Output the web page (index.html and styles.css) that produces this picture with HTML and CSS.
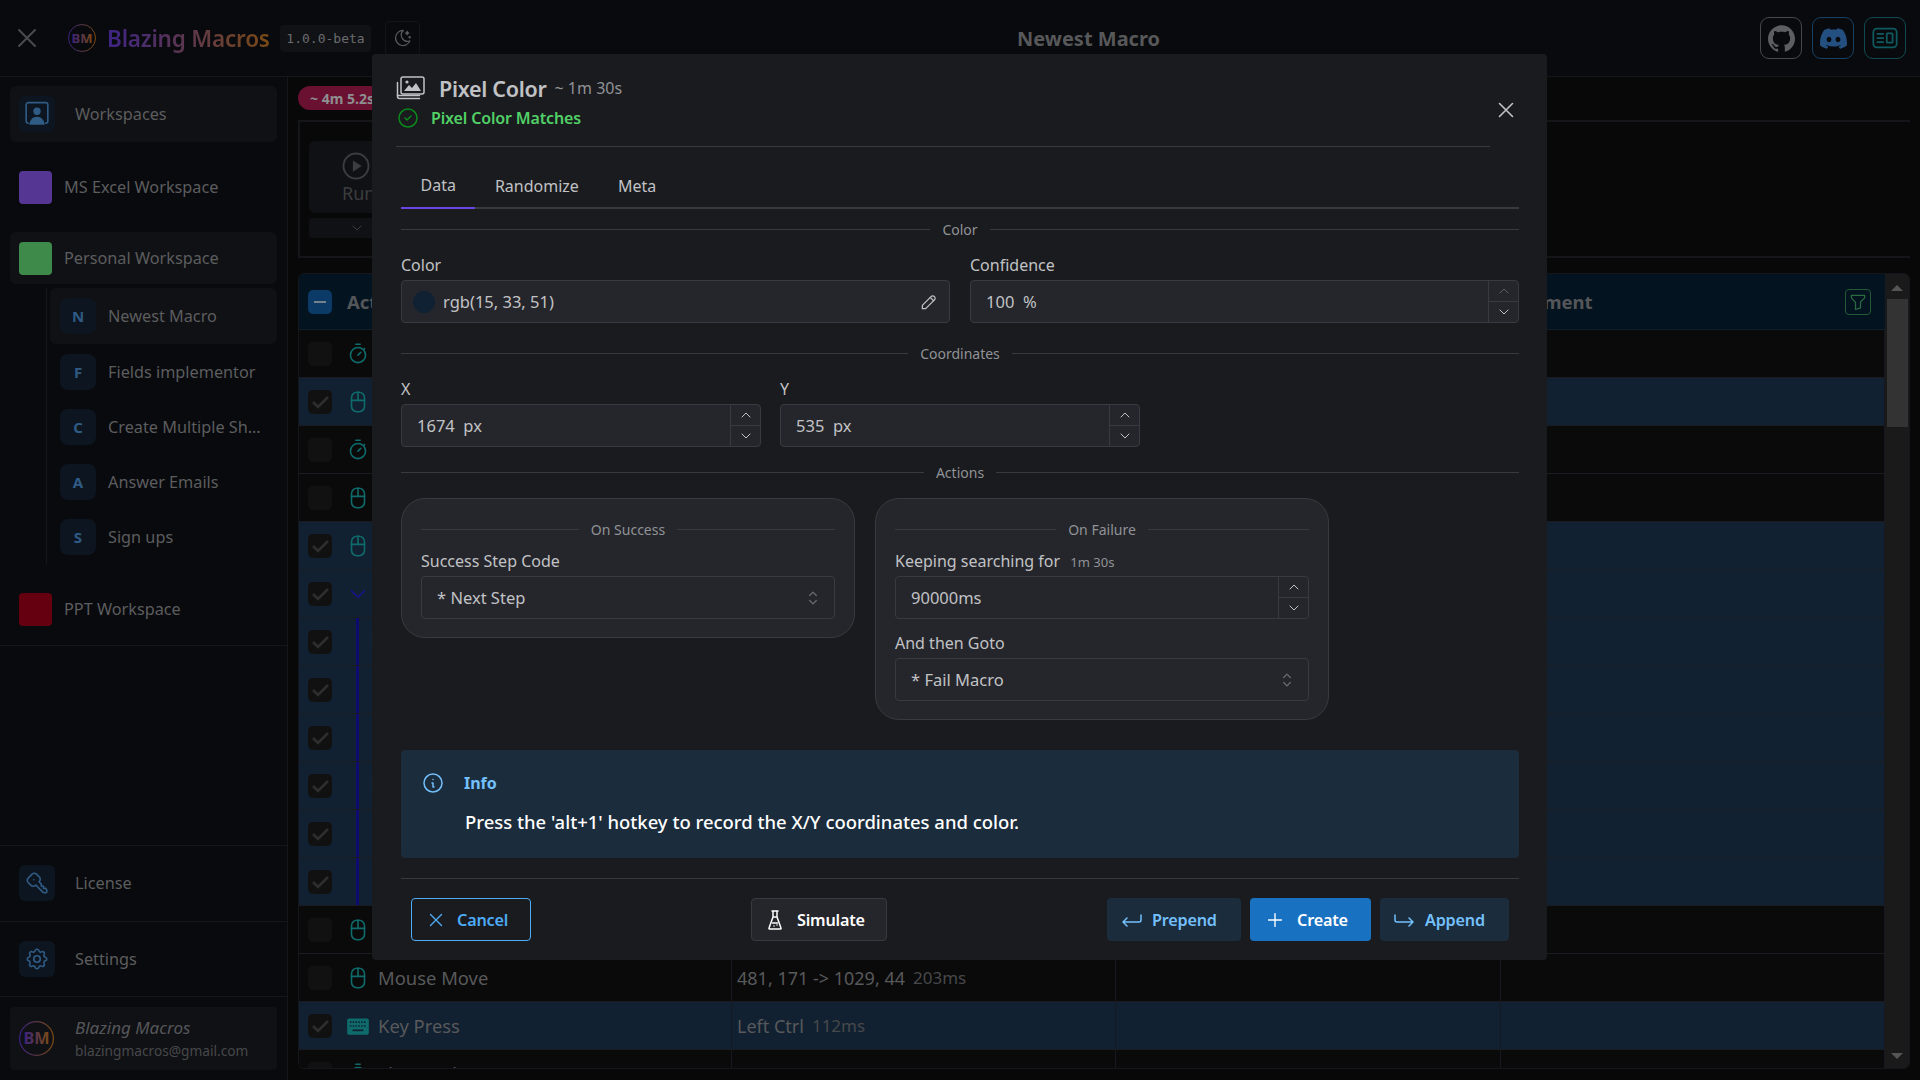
FILE: index.html
```html
<!DOCTYPE html>
<html lang="en">
<head>
<meta charset="utf-8">
<title>Blazing Macros</title>
<link rel="stylesheet" href="styles.css">
</head>
<body>
<svg class="sprite" width="0" height="0">
  <defs>
    <linearGradient id="logoGrad" x1="0" y1="0" x2="1" y2="0"><stop offset="0" stop-color="#3a2280"/><stop offset="1" stop-color="#7a4a12"/></linearGradient>
    <symbol id="i-x" viewBox="0 0 24 24"><path d="M18 6L6 18M6 6l12 12"/></symbol>
    <symbol id="i-moon" viewBox="0 0 24 24"><path d="M12 3c.132 0 .263 0 .393 0a7.5 7.5 0 0 0 7.92 12.446a9 9 0 1 1 -8.313 -12.454z"/><path d="M17 4a2 2 0 0 0 2 2a2 2 0 0 0 -2 2a2 2 0 0 0 -2 -2a2 2 0 0 0 2 -2"/><path d="M19 11h2m-1 -1v2"/></symbol>
    <symbol id="i-mouse" viewBox="0 0 24 24"><path d="M6 8a5 5 0 0 1 5-5h2a5 5 0 0 1 5 5v8a5 5 0 0 1-5 5h-2a5 5 0 0 1-5-5z"/><path d="M12 3v7.500M6 10.500h12"/></symbol>
    <symbol id="i-watch" viewBox="0 0 24 24"><path d="M5 13a7 7 0 1 0 14 0a7 7 0 0 0-14 0z"/><path d="M14.500 10.500L12 13M17 8l1-1M14 3h-4"/></symbol>
    <symbol id="i-chev" viewBox="0 0 24 24"><path d="M6 9l6 6l6-6"/></symbol>
    <symbol id="i-up" viewBox="0 0 24 24"><path d="M6 15l6-6l6 6"/></symbol>
    <symbol id="i-check" viewBox="0 0 24 24"><path class="thick" d="M5 12l5 5L20 7"/></symbol>
    <symbol id="i-selector" viewBox="0 0 24 24"><path d="M8 9l4-4l4 4M16 15l-4 4l-4-4"/></symbol>
    <symbol id="i-info" viewBox="0 0 24 24"><circle cx="12" cy="12" r="9"/><path d="M12 8.500h.01M11 12h1v4h1"/></symbol>
    <symbol id="i-ok" viewBox="0 0 24 24"><circle cx="12" cy="12" r="9"/><path d="M9 12l2 2l4-4"/></symbol>
    <symbol id="i-pencil" viewBox="0 0 24 24"><path d="M4 20h4L18.500 9.500a2.828 2.828 0 1 0-4-4L4 16v4"/><path d="M13.500 6.500l4 4"/></symbol>
    <symbol id="i-flask" viewBox="0 0 24 24"><path d="M9 3h6M10 9h4M10 3v6L6 20a.7.7 0 0 0 .5 1h11a.7.7 0 0 0 .5-1L14 9V3"/><path d="M9.500 15h5M11 18h.01M14 17h.01"/></symbol>
    <symbol id="i-prepend" viewBox="0 0 24 24"><path d="M21 7v5a2 2 0 0 1-2 2H3m4-4l-4 4l4 4"/></symbol>
    <symbol id="i-append" viewBox="0 0 24 24"><path d="M3 7v5a2 2 0 0 0 2 2h16m-4-4l4 4l-4 4"/></symbol>
    <symbol id="i-plus" viewBox="0 0 24 24"><path d="M12 5v14M5 12h14"/></symbol>
    <symbol id="i-key" viewBox="0 0 24 24"><g transform="matrix(-1 0 0 1 24 0)"><path d="M16.555 3.843l3.602 3.602a2.877 2.877 0 0 1 0 4.069l-2.643 2.643a2.877 2.877 0 0 1-4.069 0l-.301-.301l-6.558 6.558a2 2 0 0 1-1.239.578l-.175.008h-1.172a1 1 0 0 1-.993-.883l-.007-.117v-1.172a2 2 0 0 1 .467-1.284l.119-.16l.414-.414h2v-2h2v-2l2.144-2.144l-.301-.301a2.877 2.877 0 0 1 0-4.069l2.643-2.643a2.877 2.877 0 0 1 4.069 0z"/><path d="M15 9h.01"/></g></symbol>
    <symbol id="i-gear" viewBox="0 0 24 24"><path d="M10.325 4.317c.426-1.756 2.924-1.756 3.35 0a1.724 1.724 0 0 0 2.573 1.066c1.543-.94 3.31.826 2.37 2.37a1.724 1.724 0 0 0 1.065 2.572c1.756.426 1.756 2.924 0 3.35a1.724 1.724 0 0 0-1.066 2.573c.94 1.543-.826 3.31-2.37 2.37a1.724 1.724 0 0 0-2.572 1.065c-.426 1.756-2.924 1.756-3.35 0a1.724 1.724 0 0 0-2.573-1.066c-1.543.94-3.31-.826-2.37-2.37a1.724 1.724 0 0 0-1.065-2.572c-1.756-.426-1.756-2.924 0-3.35a1.724 1.724 0 0 0 1.066-2.573c-.94-1.543.826-3.31 2.37-2.37c1 .608 2.296.07 2.572-1.065z"/><circle cx="12" cy="12" r="3"/></symbol>
    <symbol id="i-filter" viewBox="0 0 24 24"><path d="M4 4h16v2.172a2 2 0 0 1-.586 1.414L15 12v7l-6 2v-8.500L4.520 7.572A2 2 0 0 1 4 6.227V4z"/></symbol>
    <symbol id="i-layout" viewBox="0 0 24 24"><rect x="2" y="4" width="20" height="16" rx="3"/><path d="M5.500 8.500h5M5.500 12h5M5.500 15.500h5"/><rect x="13.500" y="8" width="5" height="8" rx=".6"/></symbol>
    <symbol id="i-clip" viewBox="0 0 24 24"><rect x="5" y="5" width="14" height="16" rx="2"/><path d="M9 5a2 2 0 0 1 2-2h2a2 2 0 0 1 2 2"/></symbol>
    <symbol id="i-dot" viewBox="0 0 24 24"><circle cx="12" cy="12" r="9"/></symbol>
    <symbol id="i-github" viewBox="0 0 24 24"><path class="solid" d="M12 .297c-6.63 0-12 5.373-12 12 0 5.303 3.438 9.8 8.205 11.385.6.113.82-.258.82-.577 0-.285-.01-1.04-.015-2.04-3.338.724-4.042-1.61-4.042-1.61C4.422 18.07 3.633 17.7 3.633 17.7c-1.087-.744.084-.729.084-.729 1.205.084 1.838 1.236 1.838 1.236 1.07 1.835 2.809 1.305 3.495.998.108-.776.417-1.305.76-1.605-2.665-.3-5.466-1.332-5.466-5.93 0-1.31.465-2.38 1.235-3.22-.135-.303-.54-1.523.105-3.176 0 0 1.005-.322 3.3 1.23.96-.267 1.98-.399 3-.405 1.02.006 2.04.138 3 .405 2.28-1.552 3.285-1.23 3.285-1.23.645 1.653.24 2.873.12 3.176.765.84 1.23 1.91 1.23 3.22 0 4.61-2.805 5.625-5.475 5.92.42.36.81 1.096.81 2.22 0 1.606-.015 2.896-.015 3.286 0 .315.21.69.825.57C20.565 22.092 24 17.592 24 12.297c0-6.627-5.373-12-12-12"/></symbol>
    <symbol id="i-discord" viewBox="0 0 24 24"><path class="solid" d="M20.317 4.3698a19.7913 19.7913 0 00-4.8851-1.5152.0741.0741 0 00-.0785.0371c-.211.3753-.4447.8648-.6083 1.2495-1.8447-.2762-3.68-.2762-5.4868 0-.1636-.3933-.4058-.8742-.6177-1.2495a.077.077 0 00-.0785-.037 19.7363 19.7363 0 00-4.8852 1.515.0699.0699 0 00-.0321.0277C.5334 9.0458-.319 13.5799.0992 18.0578a.0824.0824 0 00.0312.0561c2.0528 1.5076 4.0413 2.4228 5.9929 3.0294a.0777.0777 0 00.0842-.0276c.4616-.6304.8731-1.2952 1.226-1.9942a.076.076 0 00-.0416-.1057c-.6528-.2476-1.2743-.5495-1.8722-.8923a.077.077 0 01-.0076-.1277c.1258-.0943.2517-.1923.3718-.2914a.0743.0743 0 01.0776-.0105c3.9278 1.7933 8.18 1.7933 12.0614 0a.0739.0739 0 01.0785.0095c.1202.099.246.1981.3728.2924a.077.077 0 01-.0066.1276 12.2986 12.2986 0 01-1.873.8914.0766.0766 0 00-.0407.1067c.3604.698.7719 1.3628 1.225 1.9932a.076.076 0 00.0842.0286c1.961-.6067 3.9495-1.5219 6.0023-3.0294a.077.077 0 00.0313-.0552c.5004-5.177-.8382-9.6739-3.5485-13.6604a.061.061 0 00-.0312-.0286zM8.02 15.3312c-1.1825 0-2.1569-1.0857-2.1569-2.419 0-1.3332.9555-2.4189 2.157-2.4189 1.2108 0 2.1757 1.0952 2.1568 2.419 0 1.3332-.9555 2.4189-2.1569 2.4189zm7.9748 0c-1.1825 0-2.1569-1.0857-2.1569-2.419 0-1.3332.9554-2.4189 2.1569-2.4189 1.2108 0 2.1757 1.0952 2.1568 2.419 0 1.3332-.946 2.4189-2.1568 2.4189Z"/></symbol>
    <symbol id="i-user" viewBox="0 0 24 24"><path d="M4 1.500h16a2 2 0 0 1 2 2v15a2 2 0 0 1-2 2M4 1.500a2 2 0 0 0-2 2v15a2 2 0 0 0 2 2"/><circle class="solid" cx="12" cy="9.500" r="3.400"/><path class="solid" d="M5 22c0-4.500 3.200-7.500 7-7.500s7 3 7 7.500z"/></symbol>
    <symbol id="i-photos" viewBox="0 0 30 24"><rect x="6" y="1" width="23" height="17" rx="2"/><path class="solid" d="M9 15l5-6 3 3 4-5 5 8z"/><circle class="solid" cx="12" cy="6" r="1.6"/><path d="M2.500 6.500v14a2 2 0 0 0 2 2h20"/><path d="M2.500 19.500h22"/></symbol>
    <symbol id="i-kbd" viewBox="0 0 24 24"><rect class="solid" x="2" y="5" width="20" height="15" rx="1.500"/><path class="hole" d="M4.500 8.500h15M4.500 12h15"/><path class="hole wide" d="M7 16h10"/></symbol>
    <symbol id="i-play" viewBox="0 0 24 24"><circle cx="12" cy="12" r="10"/><path class="solid" d="M9.500 7.500v9l7-4.500z"/></symbol>
  </defs>
</svg>

<div class="app">
  <header class="topbar">
    <div class="brand">
      <svg class="ico close-ico"><use href="#i-x"/></svg>
      <svg class="logo" viewBox="0 0 28 28"><circle cx="14" cy="14" r="13.500" fill="none" stroke="url(#logoGrad)"/><text x="14" y="18.500" text-anchor="middle" font-size="13" font-weight="700" fill="url(#logoGrad)">BM</text></svg>
      <span class="brand-name">Blazing Macros</span>
      <span class="version">1.0.0-beta</span>
      <button class="moon"><svg class="ico"><use href="#i-moon"/></svg></button>
    </div>
    <div class="page-title">Newest Macro</div>
    <div class="top-actions">
      <span class="top-btn gh"><svg class="fill-ico"><use href="#i-github"/></svg></span>
      <span class="top-btn dc"><svg class="fill-ico"><use href="#i-discord"/></svg></span>
      <span class="top-btn lay"><svg class="lay-ico"><use href="#i-layout"/></svg></span>
    </div>
  </header>

  <div class="shell">
    <aside class="sidebar">
      <div class="nav">
        <div class="nav-row head"><span class="icon-box"><svg class="ico box-ico"><use href="#i-user"/></svg></span><span>Workspaces</span></div>
        <div class="ws"><span class="swatch purple"></span><span>MS Excel Workspace</span></div>
        <div class="ws active"><span class="swatch green"></span><span>Personal Workspace</span></div>
        <div class="macros">
          <div class="macro active"><span class="letter">N</span><span>Newest Macro</span></div>
          <div class="macro"><span class="letter">F</span><span>Fields implementor</span></div>
          <div class="macro"><span class="letter">C</span><span class="trunc">Create Multiple Sheets</span></div>
          <div class="macro"><span class="letter">A</span><span>Answer Emails</span></div>
          <div class="macro"><span class="letter">S</span><span>Sign ups</span></div>
        </div>
        <div class="ws last"><span class="swatch red"></span><span>PPT Workspace</span></div>
      </div>
      <div class="side-foot">
        <div class="foot-row"><span class="icon-box"><svg class="ico box-ico"><use href="#i-key"/></svg></span><span>License</span></div>
        <div class="foot-row"><span class="icon-box"><svg class="ico box-ico"><use href="#i-gear"/></svg></span><span>Settings</span></div>
        <div class="profile-wrap">
          <div class="profile">
            <svg class="avatar" viewBox="0 0 28 28"><circle cx="14" cy="14" r="13.500" fill="none" stroke="url(#logoGrad)"/><text x="14" y="18.500" text-anchor="middle" font-size="13" font-weight="700" fill="url(#logoGrad)">BM</text></svg>
            <div class="who"><em>Blazing Macros</em><small>blazingmacros@gmail.com</small></div>
          </div>
        </div>
      </div>
    </aside>

    <main class="main">
      <span class="pill">~ 4m 5.2s</span>
      <section class="run-panel">
        <div class="run-col">
          <div class="run-btn"><svg class="ico play"><use href="#i-play"/></svg><span>Run</span></div>
          <div class="run-more"><svg class="ico"><use href="#i-chev"/></svg></div>
        </div>
      </section>
      <section class="table">
        <div class="table-body">
          <div class="row thead">
            <div class="cell first"><span class="cb minus"></span><b class="th-a">Action</b></div>
            <div class="cell"></div><div class="cell"></div>
            <div class="cell th-c"><b>Comment</b><span class="filter"><svg class="ico"><use href="#i-filter"/></svg></span></div>
          </div>
          <div class="row"><div class="cell first"><span class="cb"></span><svg class="ico act"><use href="#i-watch"/></svg></div><div class="cell"></div><div class="cell"></div><div class="cell"></div></div>
          <div class="row sel"><div class="cell first"><span class="cb on"><svg class="ico"><use href="#i-check"/></svg></span><svg class="ico act"><use href="#i-mouse"/></svg></div><div class="cell"></div><div class="cell"></div><div class="cell"></div></div>
          <div class="row"><div class="cell first"><span class="cb"></span><svg class="ico act"><use href="#i-watch"/></svg></div><div class="cell"></div><div class="cell"></div><div class="cell"></div></div>
          <div class="row"><div class="cell first"><span class="cb"></span><svg class="ico act"><use href="#i-mouse"/></svg></div><div class="cell"></div><div class="cell"></div><div class="cell"></div></div>
          <div class="row sel"><div class="cell first"><span class="cb on"><svg class="ico"><use href="#i-check"/></svg></span><svg class="ico act"><use href="#i-mouse"/></svg></div><div class="cell"></div><div class="cell"></div><div class="cell"></div></div>
          <div class="row sel"><div class="cell first"><span class="cb on"><svg class="ico"><use href="#i-check"/></svg></span><svg class="ico act navy"><use href="#i-chev"/></svg></div><div class="cell"></div><div class="cell"></div><div class="cell"></div></div>
          <div class="row sel"><div class="cell first"><span class="cb on"><svg class="ico"><use href="#i-check"/></svg></span><span class="bar"></span><svg class="ico act kid"><use href="#i-clip"/></svg></div><div class="cell"></div><div class="cell"></div><div class="cell"></div></div>
          <div class="row sel"><div class="cell first"><span class="cb on"><svg class="ico"><use href="#i-check"/></svg></span><span class="bar"></span><svg class="ico act kid far"><use href="#i-dot"/></svg></div><div class="cell"></div><div class="cell"></div><div class="cell"></div></div>
          <div class="row sel"><div class="cell first"><span class="cb on"><svg class="ico"><use href="#i-check"/></svg></span><span class="bar"></span><svg class="ico act kid far"><use href="#i-dot"/></svg></div><div class="cell"></div><div class="cell"></div><div class="cell"></div></div>
          <div class="row sel"><div class="cell first"><span class="cb on"><svg class="ico"><use href="#i-check"/></svg></span><span class="bar"></span><svg class="ico act kid"><use href="#i-clip"/></svg></div><div class="cell"></div><div class="cell"></div><div class="cell"></div></div>
          <div class="row sel"><div class="cell first"><span class="cb on"><svg class="ico"><use href="#i-check"/></svg></span><span class="bar"></span><svg class="ico act kid far"><use href="#i-dot"/></svg></div><div class="cell"></div><div class="cell"></div><div class="cell"></div></div>
          <div class="row sel"><div class="cell first"><span class="cb on"><svg class="ico"><use href="#i-check"/></svg></span><span class="bar"></span><svg class="ico act kid far"><use href="#i-dot"/></svg></div><div class="cell"></div><div class="cell"></div><div class="cell"></div></div>
          <div class="row"><div class="cell first"><span class="cb"></span><svg class="ico act"><use href="#i-mouse"/></svg></div><div class="cell"></div><div class="cell"></div><div class="cell"></div></div>
          <div class="row"><div class="cell first"><span class="cb"></span><svg class="ico act"><use href="#i-mouse"/></svg><span class="act-name">Mouse Move</span></div><div class="cell detail">481, 171 -&gt; 1029, 44 <small>203ms</small></div><div class="cell"></div><div class="cell"></div></div>
          <div class="row sel"><div class="cell first"><span class="cb on"><svg class="ico"><use href="#i-check"/></svg></span><svg class="ico act"><use href="#i-kbd"/></svg><span class="act-name">Key Press</span></div><div class="cell detail">Left Ctrl <small>112ms</small></div><div class="cell"></div><div class="cell"></div></div>
          <div class="row"><div class="cell first"><span class="cb"></span><svg class="ico act"><use href="#i-watch"/></svg><span class="act-name">Time Wait</span></div><div class="cell detail">150</div><div class="cell"></div><div class="cell"></div></div>
        </div>
        <div class="scroll">
          <span class="tri up"></span>
          <span class="thumb"></span>
          <span class="tri down"></span>
        </div>
      </section>
    </main>
  </div>

  <div class="modal">
    <div class="m-head">
      <div class="m-title-block">
        <div class="m-title"><svg class="photos"><use href="#i-photos"/></svg><strong>Pixel Color</strong><span>~ 1m 30s</span></div>
        <div class="m-sub"><svg class="ok"><use href="#i-ok"/></svg><span>Pixel Color Matches</span></div>
      </div>
      <svg class="ico m-close"><use href="#i-x"/></svg>
    </div>
    <div class="m-body">
      <div class="tabs">
        <span class="tab active">Data</span><span class="tab">Randomize</span><span class="tab">Meta</span>
      </div>
      <div class="divider d-color"><span>Color</span></div>
      <div class="grid-2">
        <label class="field"><span class="lbl">Color</span>
          <span class="input"><i class="color-dot"></i><span class="val">rgb(15, 33, 51)</span><svg class="ico pencil"><use href="#i-pencil"/></svg></span>
        </label>
        <label class="field"><span class="lbl">Confidence</span>
          <span class="input num"><span class="val">100&nbsp; %</span><span class="step"><span class="off"><svg class="ico"><use href="#i-up"/></svg></span><span><svg class="ico"><use href="#i-chev"/></svg></span></span></span>
        </label>
      </div>
      <div class="divider"><span>Coordinates</span></div>
      <div class="grid-3">
        <label class="field"><span class="lbl">X</span>
          <span class="input num"><span class="val">1674&nbsp; px</span><span class="step"><span><svg class="ico"><use href="#i-up"/></svg></span><span><svg class="ico"><use href="#i-chev"/></svg></span></span></span>
        </label>
        <label class="field"><span class="lbl">Y</span>
          <span class="input num"><span class="val">535&nbsp; px</span><span class="step"><span><svg class="ico"><use href="#i-up"/></svg></span><span><svg class="ico"><use href="#i-chev"/></svg></span></span></span>
        </label>
      </div>
      <div class="divider d-actions"><span>Actions</span></div>
      <div class="cards">
        <div class="card">
          <div class="divider inner"><span>On Success</span></div>
          <label class="field"><span class="lbl">Success Step Code</span>
            <span class="input"><span class="val">* Next Step</span><svg class="ico sel-ico"><use href="#i-selector"/></svg></span>
          </label>
        </div>
        <div class="card">
          <div class="divider inner"><span>On Failure</span></div>
          <label class="field"><span class="lbl">Keeping searching for <small>1m 30s</small></span>
            <span class="input num"><span class="val">90000ms</span><span class="step"><span><svg class="ico"><use href="#i-up"/></svg></span><span><svg class="ico"><use href="#i-chev"/></svg></span></span></span>
          </label>
          <label class="field next"><span class="lbl">And then Goto</span>
            <span class="input"><span class="val">* Fail Macro</span><svg class="ico sel-ico"><use href="#i-selector"/></svg></span>
          </label>
        </div>
      </div>
      <div class="alert">
        <div class="alert-head"><svg class="ico info"><use href="#i-info"/></svg><b>Info</b></div>
        <p>Press the 'alt+1' hotkey to record the X/Y coordinates and color.</p>
      </div>
      <div class="m-foot">
        <button class="btn cancel"><svg class="ico"><use href="#i-x"/></svg>Cancel</button>
        <button class="btn sim"><svg class="ico"><use href="#i-flask"/></svg>Simulate</button>
        <div class="foot-right">
          <button class="btn light prepend"><svg class="ico"><use href="#i-prepend"/></svg>Prepend</button>
          <button class="btn primary"><svg class="ico"><use href="#i-plus"/></svg>Create</button>
          <button class="btn light append"><svg class="ico"><use href="#i-append"/></svg>Append</button>
        </div>
      </div>
    </div>
  </div>
</div>
</body>
</html>
```
FILE: styles.css
```css
* { box-sizing: border-box; }
html, body { margin: 0; height: 100%; }
body { background: #090a0d; color: #5c5d5f; font-family: "Noto Sans", "Open Sans", sans-serif; font-size: 16px; overflow: hidden; }
.sprite { position: absolute; }
svg { display: block; flex: none; }
symbol path, symbol circle, symbol rect { fill: none; stroke: currentColor; stroke-width: 1.5; stroke-linecap: round; stroke-linejoin: round; }
symbol .solid { fill: currentColor; stroke: none; }
symbol .thick { stroke: #2e2e2f; stroke-width: 2.6; stroke-linecap: butt; stroke-linejoin: miter; }
symbol .hole { stroke: #112131; stroke-width: 1.6; stroke-dasharray: 1.4 1.2; stroke-linecap: butt; }
symbol .hole.wide { stroke-dasharray: none; }
.ico { width: 24px; height: 24px; }
button { font: inherit; }

.app { position: relative; display: flex; flex-direction: column; height: 1080px; }

.topbar { height: 77px; flex: none; display: grid; grid-template-columns: 427px 1fr 166px; align-items: center; border-bottom: 1px solid #14161c; padding: 0 14px 0 10px; }
.brand { display: flex; align-items: center; }
.close-ico { width: 32px; height: 32px; color: #4a4b4e; margin: 0 1px; }
.logo { width: 28px; height: 28px; margin-left: 24px; }
.logo text, .avatar text { font-family: "Noto Sans", sans-serif; }
.brand-name { margin-left: 11px; font-size: 22.500px; font-weight: 600; letter-spacing: -.2px; background: linear-gradient(90deg, #3e2485, #7b4a14); -webkit-background-clip: text; background-clip: text; color: transparent; width: 162px; white-space: nowrap; }
.version { margin-left: 11px; height: 27px; width: 91px; display: flex; align-items: center; justify-content: center; background: #111216; border-radius: 4px; font-family: "DejaVu Sans Mono", "Liberation Mono", monospace; font-size: 13px; color: #6a6b6d; }
.moon { margin-left: 14px; width: 35px; height: 35px; background: none; border: 1px solid #14151a; border-radius: 4px; padding: 0; display: flex; align-items: center; justify-content: center; color: #58595c; }
.moon .ico { width: 20px; height: 20px; }
.page-title { font-size: 20px; font-weight: 700; color: #57585a; text-align: center; white-space: nowrap; }
.top-actions { display: flex; justify-content: flex-end; gap: 10px; }
.top-btn { width: 42px; height: 42px; border-radius: 9px; border: 1px solid; display: flex; align-items: center; justify-content: center; }
.gh { border-color: #47484a; color: #5d5e60; }
.dc { border-color: #174063; color: #235080; }
.lay { border-color: #0f4a50; color: #0f5a60; }
.fill-ico { width: 27px; height: 27px; }
.lay-ico { width: 28px; height: 28px; }

.shell { flex: 1; display: flex; min-height: 0; }
.sidebar { width: 288px; flex: none; border-right: 1px solid #14161c; display: flex; flex-direction: column; }
.nav { padding: 9px 10px 0; border-bottom: 1px solid #14161c; }
.nav-row.head { height: 56px; display: flex; align-items: center; gap: 20px; background: #101114; border-radius: 6px; padding-left: 9px; margin-bottom: 19px; font-size: 16.250px; }
.icon-box { width: 36px; height: 36px; border-radius: 6px; background: #0d1620; color: #2f5b85; display: flex; align-items: center; justify-content: center; }
.box-ico { width: 26px; height: 26px; }
.ws { height: 52px; display: flex; align-items: center; gap: 12px; padding-left: 9px; margin-bottom: 19px; font-size: 16.250px; border-radius: 6px; }
.ws.active { background: #101114; margin-bottom: 4px; }
.ws.last { margin: 19px 0 10px; }
.swatch { width: 33px; height: 33px; border-radius: 4px; }
.purple { background: #553793; }
.green { background: #3d8a4a; }
.red { background: #650010; }
.macros { margin-left: 36px; border-left: 1px solid #14161c; padding-left: 3px; height: 276px; }
.macro { height: 55.250px; display: flex; align-items: center; gap: 12px; padding-left: 10px; font-size: 16.250px; border-radius: 6px; }
.macro.active { background: #101114; height: 56px; }
.letter { width: 36px; height: 36px; border-radius: 8px; background: #0d1620; color: #2f5b85; font-weight: 700; font-size: 15px; display: flex; align-items: center; justify-content: center; }
.trunc { width: 158px; white-space: nowrap; overflow: hidden; text-overflow: ellipsis; }
.side-foot { margin-top: auto; }
.foot-row { height: 75.500px; display: flex; align-items: center; gap: 20px; padding-left: 19px; border-top: 1px solid #14161c; font-size: 16.250px; }
.profile-wrap { border-top: 1px solid #14161c; padding: 10px; }
.profile { height: 63px; background: #101114; display: flex; align-items: center; gap: 21px; padding-left: 9px; border-radius: 4px; }
.avatar { width: 35px; height: 35px; }
.who { display: flex; flex-direction: column; gap: 2px; }
.who em { font-size: 17px; line-height: 22px; color: #55565a; }
.who small { font-size: 13.700px; line-height: 20px; color: #47484b; }

.main { flex: 1; min-width: 0; background: #080808; padding: 9px 10px 11px; display: flex; flex-direction: column; align-items: flex-start; }
.pill { height: 24px; flex: none; margin-bottom: 10px; padding: 0 12px; background: #6a1030; color: #8e8f90; font-size: 14px; font-weight: 700; border-radius: 12px; display: flex; align-items: center; width: 110px; }
.run-panel { width: 100%; height: 138px; flex: none; border: solid #15161a; border-width: 2px 0 2px 2px; padding: 19px 0 0 9px; margin-bottom: 15px; }
.run-col { width: 120px; }
.run-btn { height: 72px; background: #101114; border-radius: 6px; display: flex; flex-direction: column; align-items: flex-start; padding: 10px 0 0 33px; color: #3c3d3f; font-size: 18px; line-height: 24px; }
.play { width: 30px; height: 30px; margin-left: -1px; }
.run-more { margin-top: 5px; height: 20px; background: #101114; border-radius: 4px; display: flex; padding-left: 40px; align-items: center; color: #3c3d3f; }
.run-more .ico { width: 16px; height: 16px; }

.table { width: 100%; flex: 1; min-height: 0; display: flex; border-radius: 6px; overflow: hidden; border: 1px solid #14161c; background: #0a0a0a; }
.table-body { width: 1586px; flex: none; overflow: hidden; }
.row { display: grid; grid-template-columns: 433px 384px 385px 384px; height: 48px; background: #0a0a0a; border-bottom: 1px solid #1a1c22; }
.row.sel { background: #112131; }
.cell { display: flex; align-items: center; border-right: 1px solid #15181f; }
.first { padding-left: 9px; }
.thead { height: 56px; background: #03131f; border-bottom-color: #111d27; }
.thead .cell { border-right: none; }
.th-a { margin-left: 15px; font-size: 18.500px; color: #555659; }
.th-c { padding-left: 1px; justify-content: space-between; padding-right: 14px; color: #555659; font-size: 18.500px; }
.filter { width: 26px; height: 26px; border: 1px solid #235a35; border-radius: 4px; color: #2a6b40; display: flex; align-items: center; justify-content: center; }
.filter .ico { width: 20px; height: 20px; }
.cb { width: 24px; height: 24px; background: #111112; border-radius: 5px; display: flex; align-items: center; justify-content: center; flex: none; }
.cb .ico { width: 24px; height: 24px; }
.cb.minus { background: #0b3a66; position: relative; }
.cb.minus::after { content: ""; width: 12px; height: 2px; background: #75808c; }
.act { color: #0f6b6b; margin-left: 13px; width: 26px; height: 26px; }
.act.navy { color: #1a1490; }
.bar { width: 3px; height: 100%; background: #0e0a6e; margin-left: 24px; flex: none; }
.act.kid { margin-left: 9px; width: 22px; height: 22px; }
.act.far { margin-left: 11px; }
.act-name { margin-left: 7px; font-size: 18.400px; color: #58595b; }
.detail { padding-left: 5px; font-size: 18px; color: #58595b; gap: 8px; }
.detail small { font-size: 17px; color: #47484b; }
.scroll { flex: 1; background: #1a1a1a; display: flex; flex-direction: column; align-items: center; padding-top: 11px; }
.tri { width: 0; height: 0; border-left: 6px solid transparent; border-right: 6px solid transparent; }
.tri.up { border-bottom: 6px solid #555; }
.tri.down { border-top: 6px solid #555; margin-top: auto; margin-bottom: 9px; }
.thumb { width: 21px; height: 128px; background: #333; margin-top: 8px; }

.modal { position: absolute; left: 372px; top: 54px; width: 1175px; height: 906px; background: #1a1b1e; border-radius: 4px; color: #c1c2c5; }
.m-head { padding: 22px 0 0 24px; display: flex; }
.m-title-block { width: 1094px; height: 71px; border-bottom: 1px solid #373a40; }
.m-title { display: flex; align-items: center; height: 24px; }
.photos { width: 30px; height: 24px; color: #c1c2c5; margin-left: -1px; }
.m-title strong { font-size: 21.500px; font-weight: 600; margin-left: 14px; letter-spacing: -.3px; }
.m-title span { font-size: 16px; color: #909296; margin-left: 8px; }
.m-sub { display: flex; align-items: center; margin-top: 8px; height: 20px; }
.ok { width: 24px; height: 24px; color: #0b8a1c; }
.m-sub span { margin-left: 11px; font-size: 16px; font-weight: 600; color: #51cf66; letter-spacing: -.15px; }
.m-close { width: 26px; height: 26px; margin: 21px 0 0 3px; color: #c1c2c5; }
.m-body { padding: 18px 28px 0 29px; }
.tabs { display: flex; height: 44px; border-bottom: 2px solid #373a40; margin-bottom: 10px; }
.tab { padding: 0 19.500px 3px 19.500px; display: flex; align-items: center; font-size: 16px; height: 44px; }
.tab.active { border-bottom: 2px solid #6a45e0; }
.divider { height: 20px; display: flex; align-items: center; gap: 12px; font-size: 14px; color: #909296; margin: 20px 0 0; }
.divider::before, .divider::after { content: ""; flex: 1; height: 1px; background: #373a40; }
.d-color { margin-top: 0; }
.d-actions { margin-top: 15px; }
.field { display: block; }
.lbl { display: block; height: 20px; line-height: 20px; margin-bottom: 5px; font-size: 16px; }
.lbl small { font-size: 13px; color: #909296; margin-left: 6px; }
.grid-2 { display: grid; grid-template-columns: 1fr 1fr; gap: 20px; margin-top: 16px; }
.grid-3 { display: grid; grid-template-columns: 360px 360px; gap: 19px; margin-top: 16px; }
.input { height: 43px; display: flex; align-items: center; background: #25262b; border: 1px solid #373a40; border-radius: 4px; padding-left: 15px; position: relative; }
.val { font-size: 16.500px; flex: 1; }
.color-dot { width: 22px; height: 22px; border-radius: 50%; background: rgb(15, 33, 51); margin-right: 8px; flex: none; margin-left: -4px; }
.pencil { width: 20px; height: 20px; margin-right: 10px; }
.step { width: 30px; align-self: stretch; border-left: 1px solid #373a40; display: flex; flex-direction: column; flex: none; }
.step span { flex: 1; display: flex; align-items: center; justify-content: center; }
.step span + span { border-top: 1px solid #373a40; }
.step .ico { width: 16px; height: 16px; }
.step .off { color: #5c5f66; }
.cards { display: grid; grid-template-columns: 454px 454px; gap: 20px; margin-top: 16px; align-items: start; }
.card { background: #25262b; border: 1px solid #373a40; border-radius: 24px; padding: 20px 19px 18px; }
.divider.inner { margin: 0 0 12px; }
.field.next { margin-top: 14px; }
.sel-ico { width: 20px; height: 20px; color: #6a6c72; margin-right: 11px; }
.alert { margin-top: 30px; height: 108px; background: #1b2c3c; border-radius: 4px; padding: 23px 0 0 17px; }
.alert-head { display: flex; align-items: center; height: 20px; }
.info { color: #74c0fc; width: 24px; height: 24px; margin-left: 3px; }
.alert-head b { margin-left: 19px; font-size: 16px; color: #74c0fc; }
.alert p { margin: 17px 0 0 47px; font-size: 18.450px; font-weight: 500; line-height: 24px; color: #fff; }
.m-foot { margin-top: 20px; border-top: 1px solid #373a40; padding: 19px 10px 0; display: flex; justify-content: space-between; }
.foot-right { display: flex; gap: 9px; }
.btn { height: 43px; border-radius: 4px; border: 1px solid transparent; display: flex; align-items: center; font-size: 16.200px; font-weight: 600; letter-spacing: -.2px; padding: 0; }
.cancel { width: 120px; background: transparent; border-color: #4dabf7; color: #4dabf7; padding-left: 13px; gap: 10px; }
.cancel .ico { width: 22px; height: 22px; }
.sim { width: 136px; background: #25262b; border-color: #373a40; color: #fff; padding-left: 11px; gap: 10px; }
.light { background: #1b2c3c; color: #74c0fc; }
.prepend { width: 134px; padding-left: 12px; gap: 8px; }
.append { width: 129px; padding-left: 11px; gap: 9px; }
.primary { width: 121px; background: #1971c2; color: #fff; padding-left: 13px; gap: 11px; }
.primary .ico { width: 22px; height: 22px; }
```
